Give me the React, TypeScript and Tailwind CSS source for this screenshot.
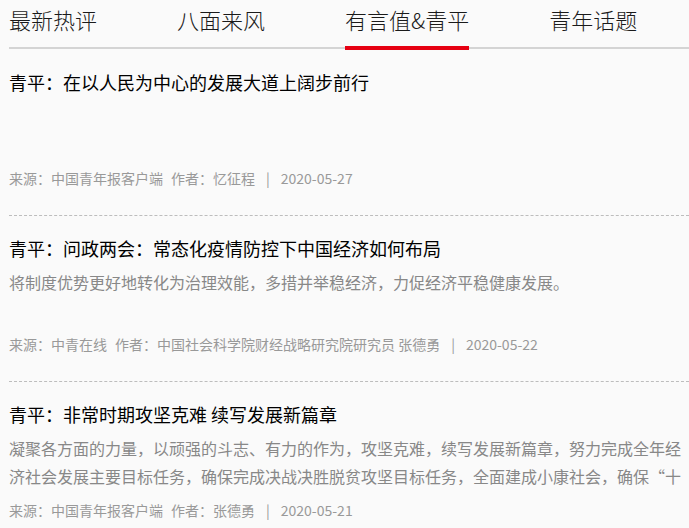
import React from "react";

const tabs = ["最新热评", "八面来风", "有言值&青平", "青年话题"];

type Article = {
  title: string;
  desc: string;
  source: string;
  author: string;
  date: string;
};

const articles: Article[] = [
  {
    title: "青平：在以人民为中心的发展大道上阔步前行",
    desc: "",
    source: "来源：中国青年报客户端",
    author: "作者：忆征程",
    date: "2020-05-27",
  },
  {
    title: "青平：问政两会：常态化疫情防控下中国经济如何布局",
    desc: "将制度优势更好地转化为治理效能，多措并举稳经济，力促经济平稳健康发展。",
    source: "来源：中青在线",
    author: "作者：中国社会科学院财经战略研究院研究员 张德勇",
    date: "2020-05-22",
  },
  {
    title: "青平：非常时期攻坚克难 续写发展新篇章",
    desc: "凝聚各方面的力量，以顽强的斗志、有力的作为，攻坚克难，续写发展新篇章，努力完成全年经济社会发展主要目标任务，确保完成决战决胜脱贫攻坚目标任务，全面建成小康社会，确保“十三五”规划圆满收官。",
    source: "来源：中国青年报客户端",
    author: "作者：张德勇",
    date: "2020-05-21",
  },
];

export default function App() {
  return (
    <div className="min-h-screen w-full overflow-hidden bg-[#fafafa] font-['Noto_Sans_CJK_SC',sans-serif]">
      <div className="ml-[9px] flex items-start gap-[80px] border-b-2 border-[#d4d4d4]">
        {tabs.map((t, i) =>
          i === 2 ? (
            <div
              key={t}
              className="mb-[-3px] border-b-4 border-[#e60012] pb-[8px] text-[22px] font-light leading-[38px] text-[#1a1a1a]"
            >
              {t}
            </div>
          ) : (
            <div
              key={t}
              className="pb-[9px] text-[22px] font-light leading-[38px] text-[#1a1a1a]"
            >
              {t}
            </div>
          )
        )}
      </div>
      <div className="ml-[9px]">
        {articles.map((a, i) => (
          <div
            key={a.title}
            className={
              i === 0
                ? "border-b border-dashed border-[#bdbdbd] pt-[18px] pb-[23px]"
                : "border-b border-dashed border-[#bdbdbd] pt-[17px] pb-[23px]"
            }
          >
            <div className="h-[30px] text-[18px] leading-[30px] text-[#000]">
              {a.title}
            </div>
            <div className="mt-[5px] h-[56px] overflow-hidden text-[16px] leading-[28px] text-[#888]">
              {a.desc}
            </div>
            <div className="mt-[6px] flex text-[14px] leading-[28px] text-[#999] whitespace-nowrap">
              <span>{a.source}</span>
              <span className="ml-[8px]">{a.author}</span>
              <span className="mx-[11px]">|</span>
              <span>{a.date}</span>
            </div>
          </div>
        ))}
      </div>
    </div>
  );
}
